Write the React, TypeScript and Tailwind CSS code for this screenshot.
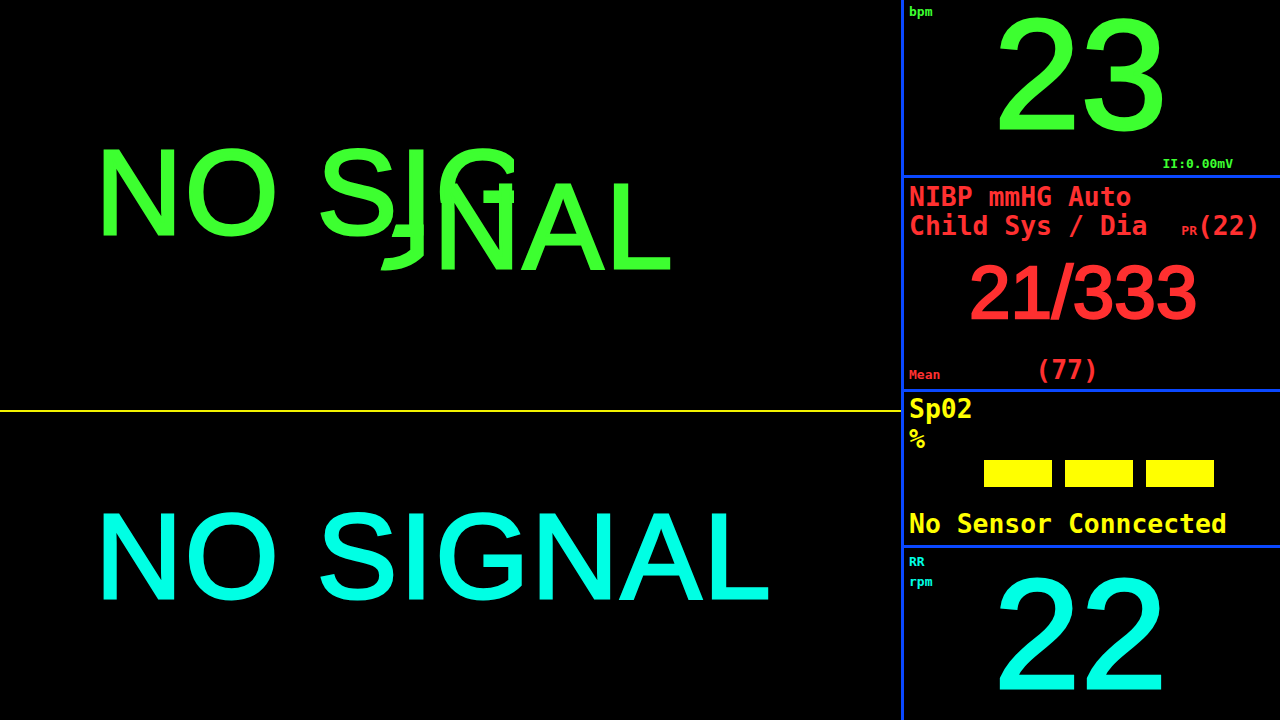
import React from 'react';

const BLUE = 'bg-[#0a48ff]';

export default function App() {
  return (
    <div className="w-[1280px] h-[720px] bg-black flex overflow-hidden select-none">
      {/* waveform area */}
      <div className="w-[901px] flex flex-col">
        <div className="h-[410px] grid font-['Liberation_Sans',Arial,sans-serif] text-[120.8px] leading-[125px] tracking-[2.2px] text-[#3dff30] whitespace-nowrap [-webkit-text-stroke:3px_#3dff30]">
          {/* upper trace text */}
          <div
            className="col-start-1 row-start-1 pt-[129.7px] pl-[95.3px]"
            style={{ clipPath: 'polygon(0px 0px, 514px 0px, 514px 203px, 430px 203px, 430px 410px, 0px 410px)' }}
          >
            NO SIGNAL
          </div>
          {/* shifted redraw */}
          <div
            className="col-start-1 row-start-1 pt-[164.2px]"
            style={{ clipPath: 'polygon(435px 0px, 901px 0px, 901px 410px, 380px 410px, 380px 272px, 397px 221px, 435px 221px)' }}
          >
            <span className="ml-[-2.7px]">NO SIGNAL</span>
          </div>
        </div>
        <div className="h-[2px] bg-[#f2f200]" />
        <div className="flex-1 pt-[81.7px] pl-[95.3px] font-['Liberation_Sans',Arial,sans-serif] text-[120.8px] leading-[125px] tracking-[2.2px] text-[#00ffe4] whitespace-nowrap [-webkit-text-stroke:3px_#00ffe4]">
          NO SIGNAL
        </div>
      </div>

      <div className={`w-[3px] ${BLUE}`} />

      {/* parameter column */}
      <div className="flex-1 flex flex-col font-['DejaVu_Sans_Mono',monospace] font-bold whitespace-nowrap">
        {/* HR */}
        <div className="h-[175px] grid text-[#3dff30]">
          <div className="col-start-1 row-start-1 pt-[5px] pl-[5px] text-[13px] leading-[13px]">bpm</div>
          <div className="col-start-1 row-start-1 pt-[9.3px] pl-[89.6px] font-['Liberation_Sans',Arial,sans-serif] font-normal text-[156.4px] leading-[130px] [-webkit-text-stroke:3px_#3dff30]">
            23
          </div>
          <div className="col-start-1 row-start-1 self-end justify-self-end pr-[47px] pb-[5px] text-[13px] leading-[13px]">
            II:0.00mV
          </div>
        </div>
        <div className={`h-[3px] ${BLUE}`} />

        {/* NIBP */}
        <div className="h-[211px] flex flex-col pl-[5px] text-[#ff3030]">
          <div className="mt-[4px] text-[26.4px] leading-[29px]">NIBP mmHG Auto</div>
          <div className="flex items-baseline text-[26.4px] leading-[29px]">
            <span>Child Sys / Dia</span>
            <span className="ml-[34px] text-[13px] leading-[13px]">PR</span>
            <span>(22)</span>
          </div>
          <div className="mt-[12.8px] pl-[60px] font-['Liberation_Sans',Arial,sans-serif] font-normal text-[74.7px] leading-[78px] [-webkit-text-stroke:2.5px_#ff3030]">
            21/333
          </div>
          <div className="mt-[24.5px] flex items-baseline leading-[29px]">
            <span className="text-[13px] leading-[13px]">Mean</span>
            <span className="ml-[95px] text-[26.4px]">(77)</span>
          </div>
        </div>
        <div className={`h-[3px] ${BLUE}`} />

        {/* SpO2 */}
        <div className="h-[153px] flex flex-col pl-[5px] text-[#ffff00] text-[26.4px] leading-[30px]">
          <div className="mt-[2px]">Sp02</div>
          <div>%</div>
          <div className="mt-[6px] ml-[75px] flex gap-[13px]">
            <div className="w-[68px] h-[27px] bg-[#ffff00]" />
            <div className="w-[68px] h-[27px] bg-[#ffff00]" />
            <div className="w-[68px] h-[27px] bg-[#ffff00]" />
          </div>
          <div className="mt-[22px]">No Sensor Conncected</div>
        </div>
        <div className={`h-[3px] ${BLUE}`} />

        {/* RR */}
        <div className="flex-1 grid text-[#00ffe4]">
          <div className="col-start-1 row-start-1 pt-[4px] pl-[5px] text-[13px] leading-[20px]">
            <div>RR</div>
            <div>rpm</div>
          </div>
          <div className="col-start-1 row-start-1 pt-[21.3px] pl-[89.6px] font-['Liberation_Sans',Arial,sans-serif] font-normal text-[156.4px] leading-[130px] [-webkit-text-stroke:3px_#00ffe4]">
            22
          </div>
        </div>
      </div>
    </div>
  );
}
